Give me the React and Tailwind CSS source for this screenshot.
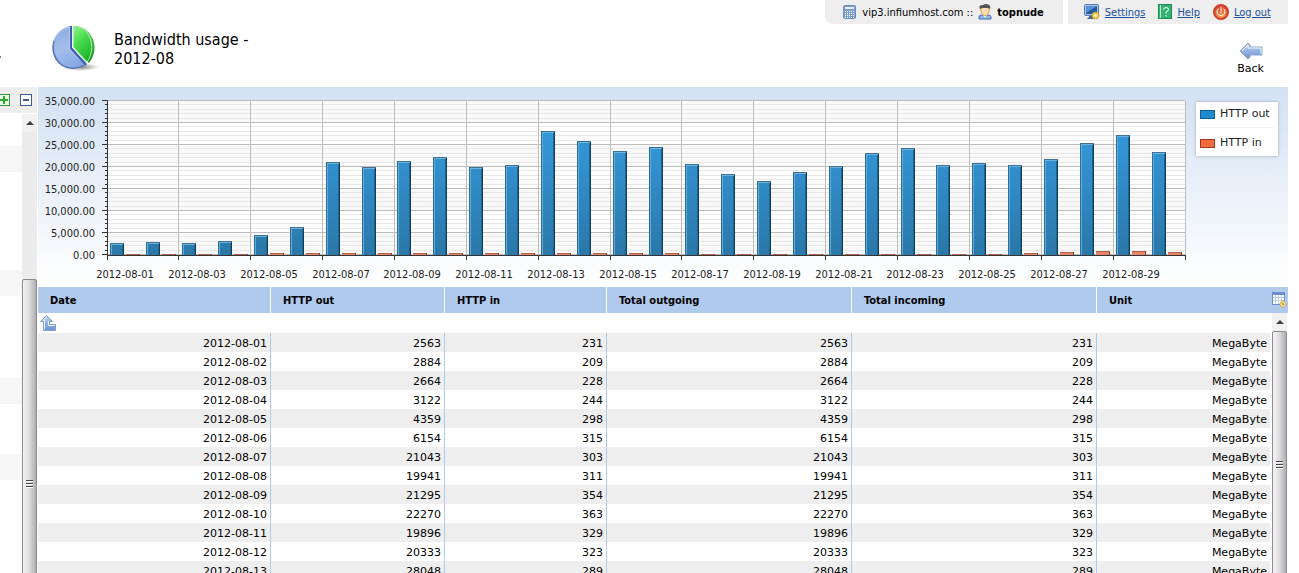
import React from 'react';

const USAGE = [
  { date: '2012-08-01', out: 2563, in: 231 },
  { date: '2012-08-02', out: 2884, in: 209 },
  { date: '2012-08-03', out: 2664, in: 228 },
  { date: '2012-08-04', out: 3122, in: 244 },
  { date: '2012-08-05', out: 4359, in: 298 },
  { date: '2012-08-06', out: 6154, in: 315 },
  { date: '2012-08-07', out: 21043, in: 303 },
  { date: '2012-08-08', out: 19941, in: 311 },
  { date: '2012-08-09', out: 21295, in: 354 },
  { date: '2012-08-10', out: 22270, in: 363 },
  { date: '2012-08-11', out: 19896, in: 329 },
  { date: '2012-08-12', out: 20333, in: 323 },
  { date: '2012-08-13', out: 28048, in: 289 },
  { date: '2012-08-14', out: 25900, in: 310 },
  { date: '2012-08-15', out: 23500, in: 305 },
  { date: '2012-08-16', out: 24400, in: 300 },
  { date: '2012-08-17', out: 20500, in: 240 },
  { date: '2012-08-18', out: 18200, in: 220 },
  { date: '2012-08-19', out: 16700, in: 210 },
  { date: '2012-08-20', out: 18700, in: 230 },
  { date: '2012-08-21', out: 20000, in: 235 },
  { date: '2012-08-22', out: 23000, in: 225 },
  { date: '2012-08-23', out: 24200, in: 240 },
  { date: '2012-08-24', out: 20300, in: 215 },
  { date: '2012-08-25', out: 20800, in: 230 },
  { date: '2012-08-26', out: 20300, in: 350 },
  { date: '2012-08-27', out: 21700, in: 560 },
  { date: '2012-08-28', out: 25300, in: 830 },
  { date: '2012-08-29', out: 27100, in: 840 },
  { date: '2012-08-30', out: 23300, in: 620 },
];

const PAGE_SIZE = 13;

const TAHOMA = "font-['DejaVu_Sans_Condensed','DejaVu_Sans',sans-serif]";
const VERDANA = "font-['DejaVu_Sans',sans-serif]";

// Plot area inside the chart's viewBox
const LEFT = 69;
const TOP = 14;
const PLOT_W = 1078;
const PLOT_H = 154;
const BASE = TOP + PLOT_H;
const MAX = 35000;
const STEP = PLOT_W / USAGE.length;

function PieIcon() {
  return (
    <svg width="48" height="48" viewBox="0 0 48 48" aria-hidden="true">
      <defs>
        <linearGradient id="pieBlue" x1="0.2" y1="0" x2="0.6" y2="1">
          <stop offset="0" stopColor="#8aa9de" />
          <stop offset="0.5" stopColor="#a4bfee" />
          <stop offset="1" stopColor="#86a8e2" />
        </linearGradient>
        <linearGradient id="pieGreen" x1="0" y1="0" x2="0.5" y2="1">
          <stop offset="0" stopColor="#8ff08c" />
          <stop offset="0.5" stopColor="#4bdc50" />
          <stop offset="1" stopColor="#1fb82c" />
        </linearGradient>
        <linearGradient id="pieRim" x1="0" y1="0" x2="0" y2="1">
          <stop offset="0" stopColor="#5fdc60" />
          <stop offset="1" stopColor="#0f8a1d" />
        </linearGradient>
        <radialGradient id="pieShadow">
          <stop offset="0" stopColor="#444" stopOpacity="0.7" />
          <stop offset="1" stopColor="#444" stopOpacity="0" />
        </radialGradient>
      </defs>
      <ellipse cx="28" cy="42" rx="19" ry="4" fill="url(#pieShadow)" />
      <path d="M19 1A22 22 0 0 0 10 41Q20 47 32 41L35 39L20 23Z" fill="#5576b8" />
      <path d="M18 1A22 22 0 0 0 11 40Q21 45 31 40L33 39L18 24Z" fill="url(#pieBlue)" />
      <path d="M2 16A21 21 0 0 1 18 2V25L33 39" fill="none" stroke="#c5d7f6" />
      <path d="M24 1C38 2 50 21 37 38L22 22Z" fill="url(#pieRim)" />
      <path d="M21 1C35 1 46 21 34 37L21 22Z" fill="url(#pieGreen)" />
      <path d="M27 2C41 7 43 26 35 37" fill="none" stroke="#b3f5b0" />
      <path d="M21 2V22L36 38" fill="none" stroke="#dff8e2" />
      <path d="M19 1V23L34 40" fill="none" stroke="#3f60ad" strokeWidth="2" />
    </svg>
  );
}

function ServerIcon() {
  return (
    <svg width="14" height="16" viewBox="0 0 14 16" aria-hidden="true">
      <rect x="0.5" y="1.5" width="12" height="13" rx="1" fill="#7d9dd2" stroke="#6e8dbd" />
      <rect x="2" y="3" width="9" height="2" fill="#e3edfc" />
      <path d="M2 7.5H12M2 9.5H12M2 11.5H12M2 13.5H12" stroke="#fff" strokeDasharray="1 1" />
    </svg>
  );
}

function UserIcon() {
  return (
    <svg width="14" height="16" viewBox="0 0 14 16" aria-hidden="true">
      <path d="M1 15V13Q1 11 4 11H10Q13 11 13 13V15Z" fill="#8fb4ea" stroke="#3f6db8" />
      <path d="M4 10L7 14L10 10Z" fill="#fff" />
      <path d="M3 4Q2 10 7 12Q12 10 11 4L9 3H5Z" fill="#fde0b8" stroke="#e09a3e" />
      <path d="M2 5Q0 1 5 1Q8 -1 11 1Q13 2 12 5L10 4H4Z" fill="#555" />
    </svg>
  );
}

function SettingsIcon() {
  return (
    <svg width="16" height="16" viewBox="0 0 16 16" aria-hidden="true">
      <rect x="0.5" y="0.5" width="14" height="11" rx="1" fill="#a9c3e8" stroke="#5c7aa8" />
      <rect x="2" y="2" width="11" height="8" fill="#24599f" />
      <path d="M2 2H13L2 9Z" fill="#5a92d8" />
      <path d="M5 12H10V13L12 15H3L5 13Z" fill="#4b678f" />
      <circle cx="11.5" cy="11.5" r="3.5" fill="#f5c443" stroke="#c8962a" strokeDasharray="2 1" />
      <circle cx="11.5" cy="11.5" r="1.5" fill="#fff6cf" />
    </svg>
  );
}

function HelpIcon() {
  return (
    <svg width="14" height="16" viewBox="0 0 14 16" aria-hidden="true">
      <rect x="0.5" y="0.5" width="13" height="14" fill="#35b174" stroke="#1f8a52" />
      <path d="M2.5 1V14" stroke="#b9ecd0" />
      <path d="M5.5 5.5Q5.500 3.500 8 3.500Q10.500 3.500 10.500 5.500Q10.500 7 8 8V9.500M8 11V12.500" fill="none" stroke="#fff" />
    </svg>
  );
}

function PowerIcon() {
  return (
    <svg width="16" height="16" viewBox="0 0 16 16" aria-hidden="true">
      <defs>
        <linearGradient id="powerFill" x1="0" y1="0" x2="0" y2="1">
          <stop offset="0" stopColor="#d93a22" />
          <stop offset="1" stopColor="#f6a54a" />
        </linearGradient>
      </defs>
      <circle cx="8" cy="8" r="7" fill="url(#powerFill)" stroke="#cf3f2e" strokeWidth="2" />
      <path d="M5 5A4 4 0 1 0 11 5M8 3V9" fill="none" stroke="#fff" strokeLinecap="round" />
    </svg>
  );
}

function BackIcon() {
  return (
    <svg width="24" height="18" viewBox="0 0 24 18" aria-hidden="true">
      <defs>
        <linearGradient id="arrowFill" x1="0" y1="0" x2="0" y2="1">
          <stop offset="0" stopColor="#c3d6f5" />
          <stop offset="1" stopColor="#6890d0" />
        </linearGradient>
      </defs>
      <path d="M1 9L9 1L11 3V5H23V13H11V15L9 17Z" fill="url(#arrowFill)" stroke="#8aa3cc" />
      <path d="M3 9L9 3V6H22V12" fill="none" stroke="#eef4ff" />
    </svg>
  );
}

function UpLevelIcon() {
  return (
    <svg width="16" height="16" viewBox="0 0 16 16" aria-hidden="true">
      <path d="M6.5 0.5L12.500 6.500H9.500V9.500H15.500V15.500H3.500V6.500H0.500Z" fill="url(#arrowFill)" stroke="#7f9fce" />
      <path d="M6.5 2L3 5.500H4.500V14.500M8.500 6V10.500H14.500" fill="none" stroke="#eef4ff" />
    </svg>
  );
}

function ColumnsIcon() {
  return (
    <svg width="15" height="16" viewBox="0 0 15 16" aria-hidden="true">
      <rect x="0.5" y="0.5" width="12" height="12" fill="#fff" stroke="#6f8fca" />
      <rect x="1" y="1" width="11" height="2" fill="#6a8fd2" />
      <path d="M1 5.500H12M1 8.500H12M3.500 3V12M6.500 3V12M9.500 3V12" stroke="#b9cdec" />
      <circle cx="11" cy="12" r="3" fill="#f5dc85" stroke="#b9a04a" strokeDasharray="2 1" />
      <circle cx="11" cy="12" r="1" fill="#a58a3a" />
    </svg>
  );
}

function ScrollBar({ thumbClass, gapClass, label }) {
  return (
    <div className="w-[15px] flex-1 min-h-0 flex flex-col overflow-hidden bg-[#ececec]" role="group" aria-label={label}>
      <button type="button" aria-label="Scroll up" className="h-[18px] shrink-0 flex items-center justify-center bg-[#f1f1f1]">
        <svg width="8" height="5" viewBox="0 0 8 5"><path d="M4 0L8 4H0Z" fill="#3f3f3f" /></svg>
      </button>
      <div className={`shrink-0 ${gapClass}`} />
      <div className={`shrink-0 flex items-center justify-center rounded-xs border border-[#8b8b8f] bg-linear-to-r from-[#f6f6f6] via-[#dcdcde] to-[#adadb2] ${thumbClass}`}>
        <svg width="7" height="9" viewBox="0 0 7 9">
          <path d="M0 1.500H7M0 4.500H7M0 7.500H7" stroke="#444" />
          <path d="M0 2.500H7M0 5.500H7M0 8.500H7" stroke="#fff" />
        </svg>
      </div>
    </div>
  );
}

function TopBar() {
  const link = 'flex items-center gap-[5px]';
  return (
    <div className={`flex justify-end gap-[5px] h-6 text-[11px] leading-none ${TAHOMA}`}>
      <div className="flex items-center bg-[#eee] rounded-bl-lg pl-[18px] pr-[19px]">
        <ServerIcon />
        <span className="mx-[5px]">vip3.infiumhost.com ::</span>
        <UserIcon />
        <b className="ml-[5px]">topnude</b>
      </div>
      <nav className="flex items-center gap-[13px] bg-[#eee] pl-4 pr-[17px] text-[#1b4f9c]">
        <a href="#settings" className={link}><SettingsIcon /><span className="underline">Settings</span></a>
        <a href="#help" className={link}><HelpIcon /><span className="underline">Help</span></a>
        <a href="#logout" className={link}><PowerIcon /><span className="underline">Log out</span></a>
      </nav>
    </div>
  );
}

function SideBar() {
  return (
    <aside className="w-[37px] shrink-0 flex flex-col min-h-0">
      <div className="h-[26px] shrink-0 flex items-center justify-between bg-[#eee] pr-[5px] mb-px">
        <button type="button" aria-label="Expand all">
          <svg width="10" height="12" viewBox="2 0 10 12">
            <rect x="0.5" y="0.5" width="11" height="11" fill="#eaffea" stroke="#2f9e3a" />
            <path d="M2 6H10M6 2V10" stroke="#2fa83a" strokeWidth="2" />
          </svg>
        </button>
        <button type="button" aria-label="Collapse all">
          <svg width="12" height="12" viewBox="0 0 12 12">
            <rect x="0.5" y="0.5" width="11" height="11" fill="#fff" stroke="#3d5a94" />
            <path d="M3 6H9" stroke="#3d5a94" strokeWidth="2" />
          </svg>
        </button>
      </div>
      <div className="flex flex-1 min-h-0">
        <div className="flex-1 overflow-hidden">
          <div className="h-[26px] mt-8 bg-[#f6f6f6]" />
          <div className="h-[26px] mt-[98px] bg-[#f6f6f6]" />
          <div className="h-[26px] mt-[82px] bg-[#f6f6f6]" />
          <div className="h-[26px] mt-[50px] bg-[#f6f6f6]" />
        </div>
        <div className="flex flex-col min-h-0">
          <ScrollBar label="Menu scroll" gapClass="h-[147px]" thumbClass="h-[408px]" />
        </div>
      </div>
    </aside>
  );
}

function OutBar({ x, value }) {
  const h = Math.round((value / MAX) * PLOT_H + 0.5);
  const y = BASE - h;
  return (
    <g>
      <rect x={x} y={y} width="14" height={h} fill="url(#outFill)" />
      <rect x={x} y={y} width="1" height={h} fill="#2a6d9b" />
      <rect x={x + 1} y={y} width="1" height={h} fill="#5fabdc" />
      <rect x={x + 12} y={y} width="1" height={h} fill="#1f6593" />
      <rect x={x + 13} y={y} width="1" height={h} fill="#123f5e" />
      <rect x={x} y={y} width="14" height="1" fill="#3c7296" />
      <rect x={x + 1} y={y + 1} width="12" height="1" fill="#6fb0d8" />
    </g>
  );
}

function InBar({ x, value }) {
  const h = Math.round((value / MAX) * PLOT_H + 0.25);
  return (
    <g>
      <rect x={x} y={BASE - h} width="14" height={h} fill="#e58468" />
      <rect x={x} y={BASE - h} width="14" height="1" fill="#b0644f" />
      <rect x={x + 13} y={BASE - h} width="1" height={h} fill="#8c3f2b" />
    </g>
  );
}

function UsageChart() {
  const minor = Array.from({ length: 36 }, (_, i) => Math.round(TOP + i * 4.4));
  const major = Array.from({ length: 8 }, (_, i) => i);
  const days = Array.from({ length: 16 }, (_, i) => Math.floor(LEFT + i * 2 * STEP));
  return (
    <svg className="flex-1 min-w-0" viewBox="0 0 1152 199" role="img" aria-label="Bandwidth usage per day">
      <defs>
        <linearGradient id="outFill" gradientUnits="userSpaceOnUse" x1="0" y1="44" x2="0" y2="168">
          <stop offset="0" stopColor="#3498db" />
          <stop offset="1" stopColor="#2b78a8" />
        </linearGradient>
      </defs>
      <rect x={LEFT} y={TOP} width={PLOT_W} height={PLOT_H} fill="#fff" />
      {[0, 2, 4, 6].map((i) => (
        <rect key={i} x={LEFT} y={TOP + i * 22} width={PLOT_W} height="22" fill="#f9f9f9" />
      ))}
      {minor.map((y) => (
        <g key={y}>
          <rect x={LEFT} y={y - 1} width={PLOT_W} height="1" fill="#e8e8e8" />
          <rect x={LEFT - 2} y={y - 1} width="2" height="1" fill="#333" />
        </g>
      ))}
      {major.map((i) => (
        <rect key={i} x={LEFT} y={TOP + i * 22 - 1} width={PLOT_W} height="1" fill="#bdbdbd" />
      ))}
      {days.map((x) => (
        <rect key={x} x={x} y={TOP} width="1" height={PLOT_H} fill="#bdbdbd" />
      ))}
      {USAGE.map((d, i) => {
        const x = Math.round(LEFT + i * STEP) + 3;
        return (
          <g key={d.date}>
            <OutBar x={x} value={d.out} />
            <InBar x={x + 16} value={d.in} />
          </g>
        );
      })}
      <rect x={LEFT} y={TOP - 1} width="1" height={PLOT_H + 6} fill="#333" />
      <rect x={LEFT} y={BASE} width={PLOT_W + 1} height="1" fill="#333" />
      {days.map((x) => (
        <rect key={x} x={x} y={BASE} width="1" height="5" fill="#333" />
      ))}
      <g className={`text-[11px] ${TAHOMA}`} fill="#222">
        {major.map((i) => (
          <g key={i}>
            <rect x={LEFT - 5} y={TOP + i * 22 - 1} width="5" height="1" fill="#333" />
            <text x="57" y={TOP + i * 22 + 4} textAnchor="end">
              {(MAX - i * 5000).toLocaleString('en-US', { minimumFractionDigits: 2 })}
            </text>
          </g>
        ))}
        {USAGE.filter((_, i) => i % 2 === 0).map((d, i) => (
          <text key={d.date} x={Math.round(LEFT + (i * 2 + 0.5) * STEP)} y="191" textAnchor="middle">{d.date}</text>
        ))}
      </g>
    </svg>
  );
}

function Legend() {
  return (
    <ul className={`w-[82px] h-[54px] shrink-0 mt-[15px] ml-[6px] mr-[10px] pl-1 pr-[5px] bg-white shadow-[0_0_3px_#9aa] text-[11px] text-[#222] ${VERDANA}`}>
      <li className="flex items-center gap-[5px] h-[26px] border-b border-[#eee] whitespace-nowrap">
        <span className="w-[15px] h-[9px] shrink-0 bg-[#1e8bd1] border border-[#135f91]" />HTTP out
      </li>
      <li className="flex items-center gap-[5px] h-[30px] whitespace-nowrap">
        <span className="w-[15px] h-[9px] shrink-0 bg-[#f26a3d] border border-[#9e3b1c]" />HTTP in
      </li>
    </ul>
  );
}

function UsageTable() {
  const th = 'h-[26px] pl-3 text-left font-bold border-r border-white';
  const td = 'h-[19px] pt-[2px] pr-[3px] border-r border-[#b0caed]';
  return (
    <div className="flex flex-1 min-h-0">
      <div className="flex-1 overflow-hidden">
        <table className="w-full table-fixed border-separate border-spacing-0 text-[11px] leading-none">
          <colgroup>
            <col className="w-[233px]" />
            <col className="w-[174px]" />
            <col className="w-[162px]" />
            <col className="w-[245px]" />
            <col className="w-[245px]" />
            <col />
          </colgroup>
          <thead className={`bg-[#b0caed] ${TAHOMA}`}>
            <tr>
              <th className={th}>Date</th>
              <th className={th}>HTTP out</th>
              <th className={th}>HTTP in</th>
              <th className={th}>Total outgoing</th>
              <th className={th}>Total incoming</th>
              <th className="h-[26px] pl-3 text-left font-bold">Unit</th>
            </tr>
          </thead>
          <tbody className={`text-right ${VERDANA}`}>
            <tr>
              <td colSpan={6} className="h-5 pl-[2px] text-left">
                <a href="#up" aria-label="Up one level" className="block"><UpLevelIcon /></a>
              </td>
            </tr>
            {USAGE.slice(0, PAGE_SIZE).map((d) => (
              <tr key={d.date} className="even:bg-[#eee]">
                <td className={td}>{d.date}</td>
                <td className={td}>{d.out}</td>
                <td className={td}>{d.in}</td>
                <td className={td}>{d.out}</td>
                <td className={td}>{d.in}</td>
                <td className="h-[19px] pt-[2px] pr-[3px] border-r-2 border-white">MegaByte</td>
              </tr>
            ))}
          </tbody>
        </table>
      </div>
      <div className="w-4 flex flex-col min-h-0">
        <button type="button" aria-label="Choose columns" className="h-[26px] shrink-0 flex items-center bg-[#b0caed]">
          <ColumnsIcon />
        </button>
        <ScrollBar label="Table scroll" gapClass="h-0" thumbClass="h-[266px]" />
      </div>
    </div>
  );
}

export default function App() {
  return (
    <div className={`h-screen overflow-hidden flex flex-col bg-white text-black pr-[11px] ${TAHOMA}`}>
      <header className="h-[87px] shrink-0 flex justify-between">
        <div className="flex items-start">
          <span className="w-px h-[2px] mt-14 bg-[#777]" />
          <div className="mt-[25px] ml-[51px]"><PieIcon /></div>
          <h1 className="w-[150px] mt-[30px] ml-[14px] text-[16px] leading-[19px]">Bandwidth usage - 2012-08</h1>
        </div>
        <div className="flex flex-col items-end">
          <TopBar />
          <a href="#back" className={`flex flex-col items-center gap-[3px] mt-[18px] mr-6 text-[11px] leading-none ${VERDANA}`}>
            <BackIcon />
            Back
          </a>
        </div>
      </header>
      <div className="flex flex-1 min-h-0">
        <SideBar />
        <main className="flex-1 min-w-0 ml-px flex flex-col min-h-0">
          <section className="shrink-0 flex items-start mb-px bg-linear-to-b from-[#d3e1f3] to-white">
            <UsageChart />
            <Legend />
          </section>
          <UsageTable />
        </main>
      </div>
    </div>
  );
}
